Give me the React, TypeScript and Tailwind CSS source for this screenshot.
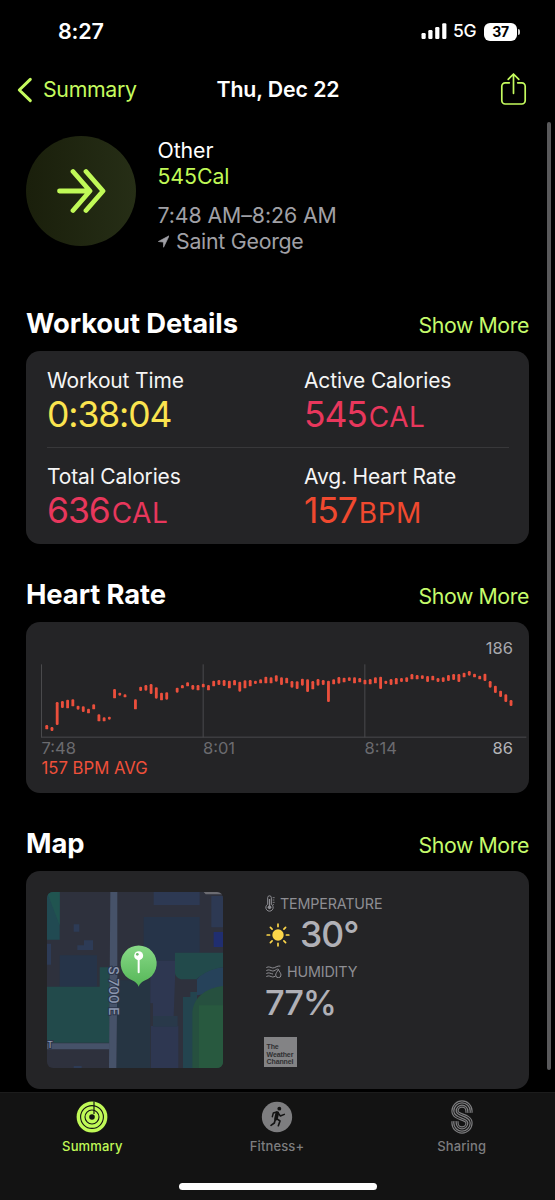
import type React from "react";

interface SectionProps {
  title: string;
  className?: string;
  children: React.ReactNode;
}

interface MetricProps {
  label: string;
  value: string;
  unit?: string;
  color: string;
}

// [slot, top, bottom] for every heart rate sample, in chart units
const samples: [number, number, number][] = [
  [0, 255, 268], [1, 261, 273], [2, 186, 255], [3, 183, 204], [4, 179, 205],
  [5, 178, 199], [6, 197, 209], [7, 199, 216], [8, 206, 220], [9, 193, 208],
  [10, 223, 244], [11, 232, 244], [12, 230, 239], [13, 147, 175], [14, 158, 167],
  [15, 163, 172], [17, 178, 208], [18, 140, 153], [19, 135, 152], [20, 132, 162],
  [21, 142, 176], [22, 158, 181], [23, 157, 179], [25, 143, 158], [26, 135, 145],
  [27, 127, 139], [28, 135, 149], [29, 135, 151], [30, 131, 142], [31, 135, 151],
  [32, 122, 139], [33, 120, 135], [34, 120, 138], [35, 122, 145], [36, 120, 136],
  [37, 125, 155], [38, 121, 145], [39, 120, 139], [40, 122, 132], [41, 118, 130],
  [42, 110, 130], [43, 112, 130], [44, 106, 125], [45, 112, 135], [46, 113, 130],
  [47, 123, 143], [48, 124, 147], [49, 116, 137], [50, 118, 156], [51, 123, 148],
  [52, 117, 137], [53, 120, 135], [54, 122, 186], [55, 118, 133], [56, 111, 131],
  [57, 113, 127], [58, 112, 123], [59, 112, 130], [60, 114, 127], [61, 119, 133],
  [62, 117, 133], [63, 112, 130], [64, 110, 147], [65, 122, 132], [66, 117, 135],
  [67, 114, 133], [68, 114, 126], [69, 112, 126], [70, 102, 118], [71, 105, 118],
  [72, 106, 117], [73, 108, 126], [74, 107, 121], [75, 114, 126], [76, 112, 126],
  [77, 105, 123], [78, 102, 120], [79, 102, 126], [80, 98, 112], [81, 93, 107],
  [82, 101, 112], [83, 107, 118], [84, 101, 123], [85, 123, 143], [86, 137, 159],
  [87, 152, 171], [88, 163, 186], [89, 180, 198],
];

function StatusBar() {
  return (
    <div className="flex h-[60px] items-center justify-between pt-[3px] pr-[35px] pl-[58px]">
      <span className="text-[21.5px] font-semibold tracking-[-0.2px]">8:27</span>
      <div className="flex items-center">
        <svg width="26" height="17" viewBox="0 0 26 17" fill="#fff">
          <rect x="0.5" y="10" width="4.2" height="6" rx="1.2" />
          <rect x="7.3" y="7" width="4.2" height="9" rx="1.2" />
          <rect x="14.2" y="4" width="4.2" height="12" rx="1.2" />
          <rect x="21.2" y="0.3" width="4.2" height="15.7" rx="1.2" />
        </svg>
        <span className="ml-[6px] w-[24px] text-[17.5px] font-medium tracking-[-0.4px]">5G</span>
        <span className="ml-[7px] flex h-[18px] w-[33px] items-center justify-center rounded-[6px] bg-white text-[14px] font-bold tracking-[-0.4px] text-black">
          37
        </span>
        <span className="ml-px h-[6px] w-[2px] rounded-r-full bg-[#cfcfcf]" />
      </div>
    </div>
  );
}

function NavBar() {
  return (
    <header className="grid h-[59px] grid-cols-[1fr_auto_1fr] items-center pr-[16px] pl-[17px]">
      <div className="flex items-center gap-[10px] text-[#c5fb5e]">
        <svg width="16" height="26" viewBox="0 0 16 26" fill="none" stroke="currentColor" strokeWidth="3" strokeLinecap="round" strokeLinejoin="round">
          <path d="M13.3 2.3 2.3 13l11 10.7" />
        </svg>
        <span className="text-[21.3px] tracking-[-0.3px]">Summary</span>
      </div>
      <h1 className="text-center text-[21.3px] font-semibold tracking-[-0.1px] whitespace-nowrap">Thu, Dec 22</h1>
      <svg className="mr-[12px] mb-[2px] justify-self-end text-[#c5fb5e]" width="27" height="34" viewBox="0 0 27 34" fill="none" stroke="currentColor" strokeWidth="1.7" strokeLinecap="round" strokeLinejoin="round">
        <path d="M9.3 10.8H5.2a3.4 3.4 0 0 0-3.4 3.4v14.4A3.4 3.4 0 0 0 5.2 32h16.6a3.4 3.4 0 0 0 3.4-3.4V14.2a3.4 3.4 0 0 0-3.4-3.4h-4.1" />
        <path d="M13.5 21.3V2.2M8.2 7.3l5.3-5.3 5.3 5.3" />
      </svg>
    </header>
  );
}

function WorkoutHeader() {
  return (
    <div className="flex h-[127px] gap-[21.5px] pt-[17px]">
      <div className="flex size-[110px] items-center justify-center rounded-full bg-linear-to-r from-[#1a1f0b] to-[#262e16]">
        <svg width="50" height="46" viewBox="0 0 50 46" fill="none" stroke="#c0f957" strokeWidth="4.8" strokeLinecap="round" strokeLinejoin="round">
          <path d="M3.5 23H33M17 3.5 34 23 17 42.5M30 3.5 47 23 30 42.5" />
        </svg>
      </div>
      <div className="pt-px text-[21.3px] leading-[26px] tracking-[-0.08px] whitespace-nowrap">
        <p>Other</p>
        <p className="text-[#c0f957]">545Cal</p>
        <p className="mt-[13px] text-[#a0a0a6]">7:48 AM–8:26 AM</p>
        <p className="flex items-center gap-[7px] tracking-[-0.25px] text-[#a0a0a6]">
          <svg width="11.5" height="13" viewBox="0 0 35 39" fill="currentColor">
            <path d="M34 2 1 19.5l15.5 1.8L17 37z" stroke="currentColor" strokeWidth="2" strokeLinejoin="round" />
          </svg>
          Saint George
        </p>
      </div>
    </div>
  );
}

function Section({ title, className = "", children }: SectionProps) {
  return (
    <section className={className}>
      <div className="flex h-[44px] items-baseline justify-between whitespace-nowrap">
        <h2 className="text-[27.4px] leading-[32px] font-bold tracking-[-0.1px]">{title}</h2>
        <a className="text-[21.3px] tracking-[-0.4px] text-[#c5fb6b]">Show More</a>
      </div>
      {children}
    </section>
  );
}

function Metric({ label, value, unit, color }: MetricProps) {
  return (
    <div className="h-[79px] whitespace-nowrap">
      <p className="text-[21px] leading-[26px] tracking-[-0.15px] text-[#f5f5f5]">{label}</p>
      <p className={`text-[35.5px] leading-[41px] tracking-[-1.1px] ${color}`}>
        {value}
        {unit && <span className="ml-[2px] text-[28px] tracking-[0.5px]">{unit}</span>}
      </p>
    </div>
  );
}

function WorkoutDetails() {
  return (
    <div className="h-[193px] rounded-[14px] bg-[#242426] pt-[17px] pr-5 pl-[21px]">
      <div className="grid grid-cols-[257px_1fr] border-b border-[#38383a]">
        <Metric label="Workout Time" value="0:38:04" color="text-[#fbe44f]" />
        <Metric label="Active Calories" value="545" unit="CAL" color="text-[#e8375c]" />
      </div>
      <div className="grid grid-cols-[257px_1fr] pt-[16px]">
        <Metric label="Total Calories" value="636" unit="CAL" color="text-[#e8375c]" />
        <Metric label="Avg. Heart Rate" value="157" unit="BPM" color="text-[#f0492f]" />
      </div>
    </div>
  );
}

function HeartRateChart() {
  return (
    <div className="h-[171px] rounded-[14px] bg-[#242426] pt-[16px] pl-[15px] text-[16.5px] leading-[20px]">
      <p className="pr-4 text-right text-[#a9a9ae]">186</p>
      <svg className="mt-[6px] block" width="486" height="74" viewBox="0 72 1458 222">
        <g stroke="#4a4a4c" strokeWidth="3">
          <path d="M1.5 73v219M486.5 73v219M971.5 73v219M0 291.5h1456" />
        </g>
        <g fill="#eb4f3c">
          {samples.map(([slot, top, bottom]) => (
            <rect key={slot} x={13 + slot * 15.65} y={top} width={8.5} height={bottom - top} rx={3.5} />
          ))}
        </g>
      </svg>
      <div className="grid grid-cols-[161.5px_161.5px_1fr] pr-4 pl-[0.5px] text-[#6b6b6f]">
        <span>7:48</span>
        <span>8:01</span>
        <span className="flex justify-between">
          8:14 <span className="text-[#b4b4b8]">86</span>
        </span>
      </div>
      <p className="pl-[0.5px] text-[16.7px] text-[#f0503a]">157 BPM AVG</p>
    </div>
  );
}

function MapThumbnail() {
  return (
    <svg className="rounded-[6px]" width="176" height="176" viewBox="0 0 528 528">
      <defs>
        <linearGradient id="pin" x1="0" y1="0" x2="0" y2="1">
          <stop offset="0" stopColor="#88d987" />
          <stop offset="1" stopColor="#55b657" />
        </linearGradient>
      </defs>
      <rect width="528" height="528" fill="#2e313d" />
      {/* parks and blocks */}
      <path d="M0 0h38v143H0z" fill="#214a52" />
      <path d="M0 0h38v100z" fill="#205450" />
      <path d="M38 190h112v94H38z" fill="#263449" />
      <path d="M80 97h17v22H80zM91 160h20v-15h27v29H91zM0 155h12v63H0zM80 522h24v6H80z" fill="#2d3b56" />
      <path d="M0 284h158v-58h30v226H0z" fill="#224a4b" />
      <path d="M211 265h99v263H208z" fill="#263543" />
      <path d="M290 75h168v107h-74v24h-94z" fill="#263449" />
      <path d="M320 0h138v39H320zM493 12h35v94h-35z" fill="#2d3953" />
      <path d="M500 120h28v45h-28z" fill="#202e70" />
      <path d="M470 0h58v7h-52z" fill="#6c6c72" />
      <path d="M310 206h74v56l-4 110h-62v-38h-8z" fill="#2e3751" />
      <path d="M312 402h82v126h-82z" fill="#2e3751" />
      <path d="M318 372h74v32h-74z" fill="#29394a" />
      <path d="M450 262c20-25 50-34 78-36v72l-78 12z" fill="#26425a" />
      <path d="M384 182h144v44c-30 4-58 16-80 36h-40c-14 0-24-10-24-20z" fill="#224a4b" />
      <path d="M408 315h22v-15h20v228h-42z" fill="#23444f" />
      <path d="M436 360c4-44 40-72 92-78v246h-92z" fill="#26503f" />
      <path d="M456 340h72v188h-72z" fill="#28593f" />
      {/* roads */}
      <path d="M0 454h188v18H0z" fill="#465269" />
      <path d="M190 0h21v265l-3 263h-22l2-263z" fill="#465269" />
      <g fill="#8b97af" stroke="#2b3449" strokeWidth="6" paintOrder="stroke" fontSize="41" fontWeight="500">
        <text transform="translate(186 222) rotate(90)">S 700 E</text>
        <text x="1" y="469" fontSize="26">
          T
        </text>
      </g>
      {/* start marker */}
      <path d="M275 284c-6-16-20-18-32-26a54 54 0 1 1 64 0c-12 8-26 10-32 26z" fill="url(#pin)" />
      <path d="M275 196v45" stroke="#fff" strokeWidth="6" strokeLinecap="round" />
      <circle cx="275" cy="191" r="13.5" fill="#fff" />
      <circle cx="271" cy="187" r="4" fill="#6cb86c" />
    </svg>
  );
}

function ThermometerIcon() {
  return (
    <svg width="11" height="17" viewBox="0 0 33 51" fill="none" stroke="currentColor" strokeWidth="3">
      <path d="M8 28V8a5.5 5.5 0 0 1 11 0v20a11 11 0 1 1-11 0z" />
      <path d="M13.5 12v22" strokeWidth="4" />
      <circle cx="13.5" cy="37" r="5.5" fill="currentColor" stroke="none" />
      <path d="M23 8h6M23 15h5M23 22h6M23 29h4" strokeWidth="2.5" />
    </svg>
  );
}

function HumidityIcon() {
  return (
    <svg width="16" height="13" viewBox="0 0 48 39" fill="none" stroke="currentColor" strokeWidth="3" strokeLinecap="round">
      <path d="M2 7c7-4 12 1 18 2S34 1 42 3M2 16c7-4 12 1 18 2s9-5 14-6M2 25c7-4 12 1 18 2M2 34c7-4 12 1 18 2 3 0 5-1 7-2" />
      <path d="M37 14c-4 7-8 11-8 16a8 8 0 0 0 16 0c0-5-4-9-8-16z" />
    </svg>
  );
}

function SunIcon() {
  return (
    <svg width="24" height="24" viewBox="0 0 24 24" stroke="#fcd64a" strokeWidth="1.7" strokeLinecap="round">
      <circle cx="12" cy="12" r="5.7" fill="#fcd64a" stroke="none" />
      <path d="M12 1.2v2.4M12 20.4v2.4M1.2 12h2.4M20.4 12h2.4M4.4 4.4l1.7 1.7M17.9 17.9l1.7 1.7M4.4 19.6l1.7-1.7M17.9 6.1l1.7-1.7" />
    </svg>
  );
}

function MapCard() {
  return (
    <div className="flex h-[218px] gap-[41px] rounded-[14px] bg-[#242426] pt-[21px] pl-[21px]">
      <MapThumbnail />
      <div className="pt-px text-[14.3px] tracking-[-0.15px] whitespace-nowrap text-[#8e8e93]">
        <div className="flex h-[21px] items-center gap-[4px] pl-px">
          <ThermometerIcon />
          TEMPERATURE
        </div>
        <div className="flex h-[42px] items-center gap-[10px] pl-[2px] text-[35.5px] font-medium tracking-[-0.9px] text-[#b0b0b6]">
          <SunIcon />
          30°
        </div>
        <div className="flex h-[31px] items-center gap-[5px] pl-[2px]">
          <HumidityIcon />
          HUMIDITY
        </div>
        <p className="pl-px text-[34.5px] leading-[31px] font-medium tracking-[-1.2px] text-[#b0b0b6]">77%</p>
        <div className="mt-[19px] h-[30px] w-[33px] bg-[#838385] pt-[6px] pl-[2.5px] font-['Liberation_Sans',sans-serif] text-[7px] leading-[7.5px] font-bold tracking-[-0.1px] text-[#303032]">
          <p>The</p>
          <p>Weather</p>
          <p>Channel</p>
        </div>
      </div>
    </div>
  );
}

function RingsIcon() {
  return (
    <svg width="32" height="32" viewBox="-16 -16 32 32">
      <circle r="15.4" fill="#c0f957" />
      <g fill="none" stroke="#131313" strokeWidth="1.1">
        <circle r="11.4" />
        <circle r="7" />
      </g>
      <circle r="2.8" fill="#131313" />
      <path d="M2-15.5V-3" stroke="#131313" strokeWidth="1.2" />
    </svg>
  );
}

function RunnerIcon() {
  return (
    <svg width="32" height="32" viewBox="-48 -48 96 96" fill="none" stroke="#131313" strokeLinecap="round" strokeLinejoin="round">
      <circle r="45.5" fill="#7d7d7f" stroke="none" />
      <circle cx="7" cy="-25" r="5.8" fill="#131313" stroke="none" />
      <path d="M1-12-3 5" strokeWidth="11" />
      <path d="M-1-15-11-12-14-1M3-13 10-3 22-8" strokeWidth="4.5" />
      <path d="M-1 5 9 12 4 26M-5 7-8 18-18 25" strokeWidth="5" />
    </svg>
  );
}

function SharingIcon() {
  const curve = "M53 37V32A21 21 0 0 0 11 32C11 53 53 47 53 68A21 21 0 0 1 11 68V63";
  return (
    <svg width="22" height="34" viewBox="-1 -1 66 102" fill="none">
      <path d={curve} stroke="#7d7d7f" strokeWidth="22" />
      <path d={curve} stroke="#131313" strokeWidth="15" />
      <path d={curve} stroke="#7d7d7f" strokeWidth="11" />
      <path d={curve} stroke="#131313" strokeWidth="3.5" />
    </svg>
  );
}

function TabBar() {
  return (
    <nav className="flex h-[108px] flex-col border-t border-[#1c1c1c] bg-[#131313]">
      <div className="grid grid-cols-3 pt-[6px] pr-px text-[13px] leading-[16px] font-medium tracking-[0.15px] text-[#7d7d7f]">
        <div className="flex flex-col items-center text-[#c0f957]">
          <span className="flex h-[39px] items-center pb-[4px]">
            <RingsIcon />
          </span>
          Summary
        </div>
        <div className="flex flex-col items-center">
          <span className="flex h-[39px] items-center pb-[4px]">
            <RunnerIcon />
          </span>
          Fitness+
        </div>
        <div className="flex flex-col items-center">
          <span className="flex h-[39px] items-center pb-[4px]">
            <SharingIcon />
          </span>
          Sharing
        </div>
      </div>
      <div className="mt-auto mb-[10px] h-[7px] w-[198px] self-center rounded-full bg-white" />
    </nav>
  );
}

export default function App() {
  return (
    <div className="relative flex h-[1200px] w-[555px] flex-col overflow-hidden bg-black font-['Inter','Liberation_Sans',sans-serif] text-white">
      <StatusBar />
      <NavBar />
      <main className="h-[973px] shrink-0 px-[26px]">
        <WorkoutHeader />
        <Section title="Workout Details" className="mt-[61px]">
          <WorkoutDetails />
        </Section>
        <Section title="Heart Rate" className="mt-[34px]">
          <HeartRateChart />
        </Section>
        <Section title="Map" className="mt-[34px]">
          <MapCard />
        </Section>
      </main>
      <TabBar />
      {/* Scroll indicator */}
      <div className="absolute top-[122px] right-[4px] h-[948px] w-[4px] rounded-full bg-[#59595b]" />
    </div>
  );
}
